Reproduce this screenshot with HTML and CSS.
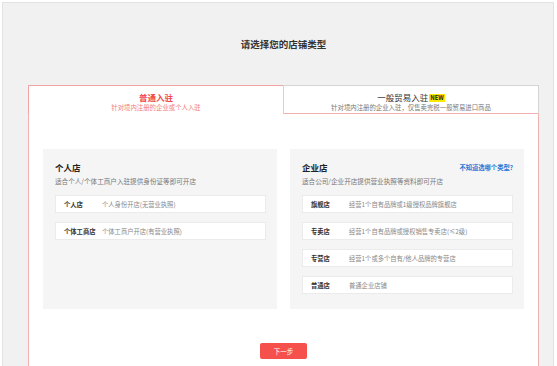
FILE: index.html
```html
<!DOCTYPE html>
<html lang="zh-CN">

<head>
  <meta charset="UTF-8" />
  <meta name="viewport" content="width=device-width, initial-scale=1.0" />
  <title>选择店铺类型</title>
  <link rel="stylesheet" href="styles.css">
</head>

<body>
  <div class="page">
    <div class="main">
      <h1 class="title">请选择您的店铺类型</h1>
      <div class="tabs">
        <a class="tab active" href="javascript:;">
          <div class="tab-name">普通入驻</div>
          <div class="tab-desc">针对境内注册的企业或个人入驻</div>
        </a>
        <a class="tab" href="javascript:;">
          <div class="tab-name">一般贸易入驻<span class="new">NEW</span></div>
          <div class="tab-desc">针对境内注册的企业入驻，仅售卖完税一般贸易进口商品</div>
        </a>
      </div>
      <div class="content">
        <div class="panels">
          <div class="panel">
            <div class="panel-hd">
              <h3>个人店</h3>
            </div>
            <p class="panel-desc">适合个人/个体工商户入驻提供身份证等即可开店</p>
            <div class="row"><b>个人店</b><span>个人身份开店(无营业执照)</span></div>
            <div class="row"><b>个体工商店</b><span>个体工商户开店(有营业执照)</span></div>
          </div>
          <div class="panel">
            <div class="panel-hd">
              <h3>企业店</h3>
              <a class="help" href="javascript:;">不知道选哪个类型?</a>
            </div>
            <p class="panel-desc">适合公司/企业开店提供营业执照等资料即可开店</p>
            <div class="row"><b>旗舰店</b><span>经营1个自有品牌或1级授权品牌旗舰店</span></div>
            <div class="row"><b>专卖店</b><span>经营1个自有品牌或授权销售专卖店(≤2级)</span></div>
            <div class="row"><b>专营店</b><span>经营1个或多个自有/他人品牌的专营店</span></div>
            <div class="row"><b>普通店</b><span>普通企业店铺</span></div>
          </div>
        </div>
        <div class="actions">
          <a class="btn" href="javascript:;">下一步</a>
        </div>
      </div>
    </div>
  </div>
</body>

</html>
```

FILE: styles.css
```css
* {
  padding: 0;
  margin: 0;
  box-sizing: border-box;
}

html,
body {
  height: 100%;
  overflow: hidden;
}

body {
  background: #fff;
  font-family: "Noto Sans CJK SC", "Noto Sans", sans-serif;
  color: #333;
}

a {
  text-decoration: none;
}

.page {
  margin: 2px 3px 0 2px;
  height: 364px;
  background: #f1f1f1;
  border: 1px solid #e2e2e2;
  border-bottom: none;
  padding-top: 33px;
}

.main {
  margin-left: 25px;
  width: 511px;
}

.title {
  font-size: 9.5px;
  line-height: 16px;
  font-weight: bold;
  text-align: center;
  color: #333;
  margin-bottom: 33px;
}

.tabs {
  display: flex;
}

.tab {
  flex: 1;
  height: 29px;
  padding-top: 5px;
  text-align: center;
  background: #fff;
  border: 1px solid #d4d4d4;
  border-bottom-color: #f1b1b1;
  color: #333;
}

.tab.active {
  border-color: #f2a3a3;
  border-right: none;
  border-bottom: none;
  color: #f0484c;
}

.tab-name {
  font-size: 8.5px;
  line-height: 12px;
}

.tab.active .tab-name {
  font-weight: bold;
}

.tab-desc {
  font-size: 6.4px;
  line-height: 10px;
  color: #777;
}

.tab.active .tab-desc {
  color: #f47a7a;
}

.new {
  display: inline-block;
  margin-left: 1px;
  padding: 0 1px;
  background: #ffe800;
  color: #222;
  font-size: 6px;
  line-height: 8px;
  font-weight: bold;
  vertical-align: 1px;
}

.content {
  height: 260px;
  background: #fff;
  border: 1px solid #f1b1b1;
  border-top: none;
  padding: 35px 14px 0;
}

.panels {
  display: flex;
  gap: 13px;
}

.panel {
  flex: 1;
  background: #f5f5f5;
  padding: 12px 11px 6px 12px;
}

.panel-hd {
  display: flex;
  justify-content: space-between;
  align-items: center;
}

.panel-hd h3 {
  font-size: 8.5px;
  line-height: 12px;
  color: #222;
}

.help {
  font-size: 6.3px;
  font-weight: bold;
  color: #2b78d4;
}

.panel-desc {
  font-size: 6.6px;
  line-height: 10px;
  margin-top: 3px;
  margin-bottom: 9px;
  color: #777;
}

.row {
  display: flex;
  align-items: center;
  height: 18px;
  margin-bottom: 9px;
  padding-left: 8px;
  background: #fff;
  border: 1px solid #ebebeb;
  font-size: 6.3px;
}

.row b {
  width: 38px;
  color: #333;
}

.row span {
  color: #888;
}

.actions {
  padding-top: 26px;
  text-align: center;
}

.btn {
  display: inline-block;
  width: 47px;
  height: 16px;
  line-height: 16px;
  border-radius: 2px;
  background: #f5504c;
  color: #fff;
  font-size: 6.5px;
}
```
